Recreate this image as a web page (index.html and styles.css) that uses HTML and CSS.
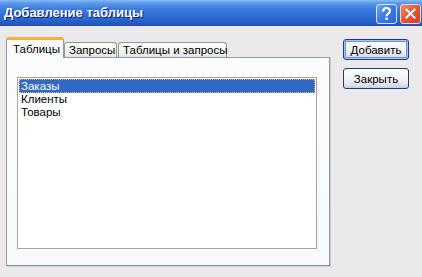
FILE: index.html
```html
<!DOCTYPE html>
<html>
<head>
<meta charset="utf-8">
<link rel="stylesheet" href="styles.css">
</head>
<body>
<div class="window">
  <div class="titlebar">
    <span class="title">Добавление таблицы</span>
    <div class="tbtns">
      <div class="tbtn help">
        <svg width="21" height="20" viewBox="0 0 21 20"><path d="M6.8 7.4 C6.8 4.6 8.5 3.4 10.5 3.4 C12.7 3.4 14.2 4.7 14.2 6.6 C14.2 8.4 13 9.1 12 9.9 C11.1 10.6 10.6 11.1 10.6 12.6" fill="none" stroke="#fff" stroke-width="2.4"/><rect x="9.3" y="14" width="2.6" height="2.6" fill="#fff"/></svg>
      </div>
      <div class="tbtn close">
        <svg width="21" height="20" viewBox="0 0 21 20"><path d="M6 5 L15 14 M15 5 L6 14" stroke="#fff" stroke-width="2.2" stroke-linecap="square"/></svg>
      </div>
    </div>
  </div>
  <div class="content">
    <div class="tabarea">
      <div class="tabs">
        <div class="tab active">Таблицы</div>
        <div class="tab t2">Запросы</div>
        <div class="tab t3">Таблицы и запросы</div>
      </div>
      <div class="panel">
        <div class="listbox">
          <div class="item sel">Заказы</div>
          <div class="item">Клиенты</div>
          <div class="item">Товары</div>
        </div>
      </div>
    </div>
    <div class="buttons">
      <button class="btn default">Добавить</button>
      <button class="btn">Закрыть</button>
    </div>
  </div>
</div>
</body>
</html>
```
FILE: styles.css
```css
html, body {
  margin: 0;
  padding: 0;
}
body {
  width: 422px;
  height: 277px;
  overflow: hidden;
  background: #ECE9EC;
  font-family: "Liberation Sans", Arial, sans-serif;
  font-size: 11.5px;
  color: #000;
}
.window {
  width: 422px;
  height: 277px;
}
.titlebar {
  height: 26px;
  display: flex;
  align-items: center;
  justify-content: space-between;
  padding-left: 4px;
  background: linear-gradient(to bottom, #86BCF4 0px, #5C9AEA 3px, #3F80E0 8px, #3270D8 14px, #2A64CE 20px, #2356C0 24px, #1E4CB0 26px);
}
.title {
  color: #fff;
  font-weight: bold;
  font-size: 13px;
  text-shadow: 1px 1px 0 #0A1E6A;
  padding-bottom: 1px;
}
.tbtns {
  display: flex;
  gap: 3px;
  padding-right: 1px;
  padding-top: 1px;
}
.tbtn {
  width: 19px;
  height: 18px;
  border: 1px solid #fff;
  border-radius: 3px;
  display: flex;
  align-items: center;
  justify-content: center;
  overflow: hidden;
}
.tbtn svg {
  display: block;
}
.help {
  background: linear-gradient(135deg, #6AA2F2 0%, #3C7AE6 50%, #2D62D2 100%);
  border-color: #D8E4F8;
}
.close {
  background: linear-gradient(135deg, #EE8A6E 0%, #E2573A 50%, #D04020 100%);
  border-color: #F4D6CC;
}
.content {
  display: flex;
  padding-top: 11px;
  padding-left: 6px;
}
.tabarea {
  width: 324px;
}
.tabs {
  display: flex;
  align-items: flex-end;
  height: 20px;
  position: relative;
  z-index: 1;
}
.tab {
  box-sizing: border-box;
  border: 1px solid #919B9C;
  border-bottom: none;
  border-radius: 3px 3px 0 0;
  background: linear-gradient(to bottom, #FFFFFF 0%, #F4F4F0 60%, #E2E4EA 100%);
  height: 15px;
  padding-top: 1px;
  padding-left: 4px;
  line-height: 13px;
  white-space: nowrap;
}
.tab.active {
  width: 58px;
  height: 21px;
  margin-bottom: -1px;
  background: #FCFCFE;
  border-top: 3px solid #F7B03C;
  padding-top: 3px;
  padding-left: 6px;
  line-height: 13px;
}
.t2 {
  width: 53px;
}
.t3 {
  width: 109px;
  margin-left: 1px;
}
.panel {
  box-sizing: border-box;
  height: 209px;
  border: 1px solid #919B9C;
  box-shadow: 1px 1px 0 #C9CED6;
  background: linear-gradient(to bottom, #FCFCFE 0%, #F8F9FD 100%);
  padding-top: 19px;
  padding-left: 10px;
}
.listbox {
  box-sizing: border-box;
  width: 300px;
  height: 172px;
  border: 1px solid #A5A5A5;
  background: #fff;
  padding: 1px;
}
.item {
  height: 13px;
  line-height: 13px;
  padding-left: 2px;
  white-space: nowrap;
}
.item.sel {
  background: #316AC5;
  color: #fff;
  outline: 1px dotted #D9B46A;
  outline-offset: -1px;
  height: 14px;
  line-height: 14px;
}
.buttons {
  display: flex;
  flex-direction: column;
  gap: 8px;
  margin-left: 13px;
  padding-top: 2px;
}
.btn {
  box-sizing: border-box;
  width: 66px;
  height: 21px;
  border: 1px solid #1C3F7A;
  border-radius: 3px;
  background: linear-gradient(to bottom, #FFFFFF 0%, #F2F4F8 50%, #DCE2EC 85%, #C6CFDD 100%);
  font-family: "Liberation Sans", Arial, sans-serif;
  font-size: 11.5px;
  color: #000;
  padding: 0;
  margin: 0;
}
.btn.default {
  box-shadow: inset 0 0 0 1px #A6C4EE, inset 0 0 0 2px #6E96DE;
}
```
